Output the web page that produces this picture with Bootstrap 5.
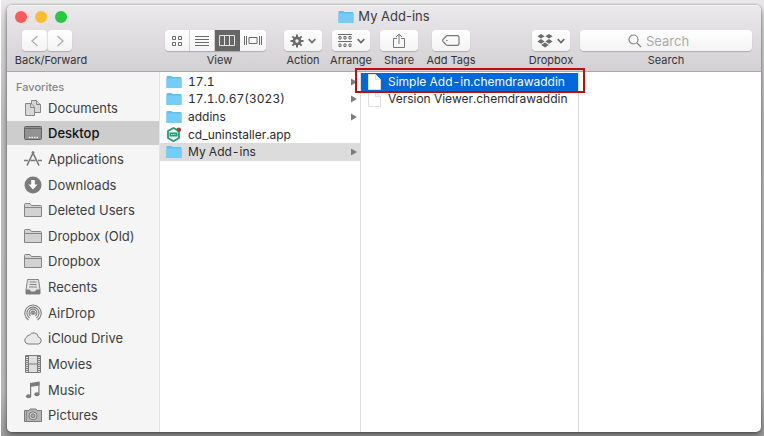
<!DOCTYPE html>
<html lang="en">
<head>
<meta charset="utf-8">
<meta name="viewport" content="width=device-width, initial-scale=1">
<title>My Add-ins</title>
<link href="https://cdn.jsdelivr.net/npm/bootstrap@5.3.0/dist/css/bootstrap.min.css" rel="stylesheet">
<style>
body { font-family: Inter, Roboto, "Liberation Sans", sans-serif; font-size: 12px; line-height: 16px; color: #2b2b2b; padding: 5px 3px 4px 7px; background: linear-gradient(to bottom, #e9e9e9, #d9d9d9 30px, #c0c0c0 120px, #bcbcbc 90%, #9c9c9c); box-shadow: inset 1px 0 #fff; }
.finder { border-radius: 5px; overflow: hidden; background: #fff; box-shadow: 0 0 2px rgba(0,0,0,.45), 0 4px 6px rgba(0,0,0,.4); }
.chrome { background: linear-gradient(#ebe9eb, #d2d0d2); border-bottom: 1px solid #a9a8a9; height: 67px; box-shadow: inset 0 1px #f6f5f6; }
.title-row { height: 24px; }
.light { width: 12px; height: 12px; border-radius: 50%; border: 0; padding: 0; }
.red { background: #fc5b57; } .amber { background: #fdbc2e; } .green { background: #28c940; }
.window-title { font-size: 13px; font-weight: 400; color: #3c3a3c; }
.tools { padding: 1px 9px 0 15px; }
.tool { width: 38px; }
.tool-nav { width: 50px; }
.tool-view { width: 101px; }
.tool-search { width: 172px; }
.grow-a { flex: 3 1 0; } .grow-b { flex: 2 1 0; }
.gap-tool { width: 10px; } .gap-wide { width: 18px; }
.key { background: linear-gradient(#fff, #f4f3f4); border: 0; border-radius: 4px; height: 21px; padding: 0; box-shadow: 0 1px 1px rgba(0,0,0,.2); color: #6b6b6b; }
.nav-key { width: 25px; color: #b0b0b0; }
.seg .key { width: 25px; border-radius: 0; border-right: 1px solid #dcdadc; }
.seg .key:first-child { border-radius: 4px 0 0 4px; }
.seg .key:last-child { border-radius: 0 4px 4px 0; border: 0; width: 26px; }
.seg .key.pressed { background: #666; color: #e5e5e5; border-color: #666; }
.cap { font-size: 11px; line-height: 14px; margin-top: 2px; color: #353335; white-space: nowrap; }
.find-input { border: 0; outline: 0; background: none; width: 58px; padding: 0; font-size: 13px; line-height: 16px; color: #333; }
.find-input::placeholder { color: #aaa; opacity: 1; }
.side { width: 153px; background: #f5f5f5; border-right: 1px solid #e4e4e4; padding: 7px 0 4px; color: #3e3e3e; }
.side h2 { font-size: 11px; line-height: 16px; margin: 0; padding-left: 9px; font-weight: 500; color: #858585; }
.side li { flex: 1 1 0; }
.side a { height: 24px; padding-left: 17px; gap: 6px; color: inherit; font-size: 13px; }
.side a.chosen { background: #cdcdcd; color: #111; font-weight: 500; }
.side svg { width: 18px; height: 18px; color: #7b7b7b; }
.pane-a { width: 201px; border-right: 1px solid #dcdcdc; padding-top: 1px; }
.pane-b { width: 218px; border-right: 1px solid #dcdcdc; padding-top: 1px; }
.files-five, .files-two { font-variant-numeric: tabular-nums; }
.files-five { height: 88px; } .files-two { height: 35px; }
.files-five li, .files-two li { flex: 1 1 0; }
.file { color: #2b2b2b; height: 100%; padding: 0 3px 0 6px; gap: 6px; }
.pane-b .file { padding-left: 7px; gap: 7px; }
.file.open { background: #dcdcdc; }
.file.lit { background: #0068da; color: #fff; }
.tri { width: 6px; height: 8px; }
.callout { position: absolute; border: 2px solid #bd0d0d; top: -5px; bottom: -2px; left: -6px; right: -7px; pointer-events: none; z-index: 2; }
</style>
<script src="https://cdn.jsdelivr.net/npm/bootstrap@5.3.0/dist/js/bootstrap.bundle.min.js"></script>
</head>
<body class="d-flex flex-column min-vh-100">
<svg class="d-none" aria-hidden="true">
  <symbol id="blue-folder" viewBox="0 0 16 14"><path d="M.5 2Q.5 1 1.500 1H5.500L6.500 2H14.500Q15.500 2 15.500 3V13H.5Z" fill="#5fc0ec"/><path d="M.5 3.500H15.500V12.500Q15.500 13 15 13H1Q.5 13 .5 12.500Z" fill="#74cdf7"/></symbol>
  <symbol id="grey-folder" viewBox="0 0 18 18"><path d="M.5 15.500V3.500Q.5 2.500 1.500 2.500H6L7.500 4.500H16.500Q17.500 4.500 17.500 5.500V15.500Z" fill="#d2d2d2" stroke="#858585"/><path d="M1 6.500H17" stroke="#858585"/></symbol>
  <symbol id="page" viewBox="0 0 13 16"><path d="M.5.500H7.500L12.500 5.500V15.500H.5Z" fill="#fff" stroke="#dedede"/><path d="M7.500.500V5.500H12.500" fill="#f2f2f2" stroke="#dedede"/></symbol>
  <symbol id="tri" viewBox="0 0 6 8"><path d="M0 .5 6 4 0 7.500Z" fill="#7c7c7c"/></symbol>
  <symbol id="down" viewBox="0 0 8 6"><path d="M.7 1.200 4 4.500 7.300 1.200" fill="none" stroke="#6b6b6b" stroke-width="1.700"/></symbol>
</svg>
<main class="finder flex-grow-1 d-flex flex-column">
  <header class="chrome">
    <div class="title-row d-flex align-items-center position-relative justify-content-center">
      <div class="d-flex gap-2 position-absolute start-0 ps-2">
        <button class="light red" aria-label="Close"></button><button class="light amber" aria-label="Minimize"></button><button class="light green" aria-label="Zoom"></button>
      </div>
      <h1 class="window-title m-0 d-flex align-items-center gap-1"><svg width="16" height="14"><use href="#blue-folder"/></svg>My Add-ins</h1>
    </div>
    <div class="tools d-flex">
      <div class="tool-nav d-flex flex-column align-items-center">
        <div class="d-flex">
          <button class="key nav-key" aria-label="Back"><svg class="d-block mx-auto" width="10" height="12"><path d="M7.500 1 2 6 7.500 11" fill="none" stroke="currentColor" stroke-width="1.300"/></svg></button>
          <button class="key nav-key border-start" aria-label="Forward"><svg class="d-block mx-auto" width="10" height="12"><path d="M2.500 1 8 6 2.500 11" fill="none" stroke="currentColor" stroke-width="1.300"/></svg></button>
        </div>
        <span class="cap ps-2">Back/Forward</span>
      </div>
      <div class="grow-a"></div>
      <div class="tool-view d-flex flex-column align-items-center">
        <div class="d-flex seg">
          <button class="key" aria-label="Icons"><svg class="d-block mx-auto" width="12" height="11" fill="none" stroke="currentColor"><path d="M1.500 1.500H4.500V4.500H1.500ZM7.500 1.500H10.500V4.500H7.500ZM1.500 7.500H4.500V10.500H1.500ZM7.500 7.500H10.500V10.500H7.500Z"/></svg></button>
          <button class="key" aria-label="List"><svg class="d-block mx-auto" width="14" height="11" stroke="currentColor"><path d="M0 1.500H14M0 4.500H14M0 7.500H14M0 10.500H14"/></svg></button>
          <button class="key pressed" aria-label="Columns"><svg class="d-block mx-auto" width="16" height="11"><path d="M.5.500H15.500V10.500H.5ZM5.500.500V10.500M10.500.500V10.500" stroke="currentColor" fill="none"/></svg></button>
          <button class="key" aria-label="Cover Flow"><svg class="d-block mx-auto" width="20" height="11" fill="none" stroke="currentColor"><path d="M1.500 1V10M3.500 1V10M6 2.500H14V8.500H6ZM16.500 1V10M18.500 1V10"/></svg></button>
        </div>
        <span class="cap ps-2">View</span>
      </div>
      <div class="gap-wide flex-shrink-0"></div>
      <div class="tool d-flex flex-column align-items-center">
        <button class="key w-100 d-flex align-items-center justify-content-center gap-1" aria-label="Action"><svg width="14" height="14" viewBox="-7 -7 14 14"><g stroke="#6b6b6b" stroke-width="2"><path d="M0-6.500V6.500M-6.500 0H6.500M-4.600-4.600 4.600 4.600M-4.600 4.600 4.600-4.600"/></g><circle r="4.400" fill="#6b6b6b"/><circle r="1.700" fill="#fafafa"/></svg><svg width="8" height="6"><use href="#down"/></svg></button>
        <span class="cap">Action</span>
      </div>
      <div class="gap-tool flex-shrink-0"></div>
      <div class="tool d-flex flex-column align-items-center">
        <button class="key w-100 d-flex align-items-center justify-content-center gap-1" aria-label="Arrange"><svg width="15" height="14" fill="none" stroke="currentColor"><path d="M0 .5H14M0 7.500H14"/><path d="M1 2.500h2v2.500H1ZM6 2.500h2v2.500H6ZM11 2.500h2v2.500H11ZM1 10h2v2.500H1ZM6 10h2v2.500H6ZM11 10h2v2.500H11Z"/></svg><svg width="8" height="6"><use href="#down"/></svg></button>
        <span class="cap">Arrange</span>
      </div>
      <div class="gap-tool flex-shrink-0"></div>
      <div class="tool d-flex flex-column align-items-center">
        <button class="key w-100" aria-label="Share"><svg class="d-block mx-auto" width="12" height="16" fill="none" stroke="#777"><path d="M4 5.500H.5V14.500H11.500V5.500H8M6 11V1M3 4 6 1 9 4"/></svg></button>
        <span class="cap">Share</span>
      </div>
      <div class="gap-tool flex-shrink-0"></div><div class="pe-1"></div>
      <div class="tool d-flex flex-column align-items-center">
        <button class="key w-100" aria-label="Add Tags"><svg class="d-block mx-auto" width="18" height="11" fill="none" stroke="#777"><path d="M5.500.600H15Q17 .6 17 2.500V8.500Q17 10.400 15 10.400H5.500Q4.500 10.400 3.800 9.500L1 6.300Q.4 5.500 1 4.700L3.800 1.500Q4.500.600 5.500.600Z" stroke-width="1.200"/><circle cx="4.800" cy="5.500" r=".8" fill="#777" stroke="none"/></svg></button>
        <span class="cap">Add Tags</span>
      </div>
      <div class="grow-b"></div>
      <div class="tool d-flex flex-column align-items-center">
        <button class="key w-100 d-flex align-items-center justify-content-center gap-1" aria-label="Dropbox"><svg width="16" height="14" fill="#6b6b6b"><path d="M4 0 7.600 2.300 4 4.600.400 2.300ZM12 0 15.600 2.300 12 4.600 8.400 2.300ZM4 5.100 7.600 7.400 4 9.700.400 7.400ZM12 5.100 15.600 7.400 12 9.700 8.400 7.400ZM8 8.500 11.800 11 8 13.600 4.200 11Z"/></svg><svg width="8" height="6"><use href="#down"/></svg></button>
        <span class="cap">Dropbox</span>
      </div>
      <div class="gap-tool flex-shrink-0"></div>
      <div class="tool-search d-flex flex-column align-items-center">
        <div class="key w-100 d-flex align-items-center justify-content-center gap-1"><svg width="14" height="14" fill="none" stroke="#858585" stroke-width="1.200"><circle cx="5.500" cy="5.500" r="4.500"/><path d="M9 9 13 13"/></svg><input class="find-input" id="find" type="text" placeholder="Search"></div>
        <label class="cap" for="find">Search</label>
      </div>
    </div>
  </header>
  <div class="d-flex flex-grow-1">
    <nav class="side d-flex flex-column flex-shrink-0" aria-label="Favorites">
      <h2>Favorites</h2>
      <ul class="list-unstyled m-0 d-flex flex-column flex-grow-1">
        <li class="d-flex align-items-center"><a href="#" class="w-100 d-flex align-items-center text-decoration-none"><svg viewBox="0 0 18 18" fill="#d8d8d8" stroke="#858585"><path d="M7.500 1.500H12.500L16.500 5.500V13.500H7.500Z"/><path d="M12.500 1.500V5.500H16.500"/><path d="M1.500 4.500H7L10.500 8V16.500H1.500Z"/><path d="M6.500 4.500V8.500H10.500"/></svg>Documents</a></li>
        <li class="d-flex align-items-center"><a href="#" class="chosen w-100 d-flex align-items-center text-decoration-none"><svg viewBox="0 0 18 18"><rect x=".5" y="2.500" width="17" height="13" rx="1" fill="#929292" stroke="#606060"/><path d="M1 4.500H17" stroke="#666"/><path d="M5 13.500H14" stroke="#eee" stroke-width="1.500" stroke-dasharray="1.500 1"/></svg>Desktop</a></li>
        <li class="d-flex align-items-center"><a href="#" class="w-100 d-flex align-items-center text-decoration-none"><svg viewBox="0 0 18 18" fill="none" stroke="currentColor" stroke-width="1.700"><path d="M9.500 2 3 15.500M8.500 2 15 15.500M0 10.500H4M6.500 10.500H11.500M14 10.500H18"/><circle cx="9" cy="2.500" r="1" stroke-width="1"/></svg>Applications</a></li>
        <li class="d-flex align-items-center"><a href="#" class="w-100 d-flex align-items-center text-decoration-none"><svg viewBox="0 0 18 18"><circle cx="9" cy="9" r="8.500" fill="#7b7b7b"/><path d="M7.200 4H10.800V8.500H13.500L9 13.500 4.500 8.500H7.200Z" fill="#fff"/></svg>Downloads</a></li>
        <li class="d-flex align-items-center"><a href="#" class="w-100 d-flex align-items-center text-decoration-none"><svg><use href="#grey-folder"/></svg>Deleted Users</a></li>
        <li class="d-flex align-items-center"><a href="#" class="w-100 d-flex align-items-center text-decoration-none"><svg><use href="#grey-folder"/></svg>Dropbox (Old)</a></li>
        <li class="d-flex align-items-center"><a href="#" class="w-100 d-flex align-items-center text-decoration-none"><svg><use href="#grey-folder"/></svg>Dropbox</a></li>
        <li class="d-flex align-items-center"><a href="#" class="w-100 d-flex align-items-center text-decoration-none"><svg viewBox="0 0 18 18"><path d="M3.500 1.500H14.500L16 11.500V16H2V11.500Z" fill="#e4e4e4" stroke="#858585"/><path d="M5.500 4H12.500M5.500 6.500H12.500M5 9H13" stroke="#858585"/><path d="M2 11.500H5.500L7 13.500H11L12.500 11.500H16V16H2Z" fill="#7b7b7b"/></svg>Recents</a></li>
        <li class="d-flex align-items-center"><a href="#" class="w-100 d-flex align-items-center text-decoration-none"><svg viewBox="0 0 18 18" fill="none" stroke="#7b7b7b" stroke-width="1.100"><path d="M4.500 16A8.200 8.200 0 1 1 13.500 16M5.500 14A6 6 0 1 1 12.500 14M6.500 12A3.900 3.900 0 1 1 11.500 12M7.500 10.500A2 2 0 1 1 10.500 10.500"/><circle cx="9" cy="9.500" r=".8" fill="#7b7b7b"/></svg>AirDrop</a></li>
        <li class="d-flex align-items-center"><a href="#" class="w-100 d-flex align-items-center text-decoration-none"><svg viewBox="0 0 18 18"><path d="M4.200 15A3.700 3.700 0 0 1 2.800 8 2.600 2.600 0 0 1 5.600 6.100 4.700 4.700 0 0 1 14.300 8.100 3.500 3.500 0 0 1 14.300 15Z" fill="#e9e9e9" stroke="#7b7b7b"/></svg>iCloud Drive</a></li>
        <li class="d-flex align-items-center"><a href="#" class="w-100 d-flex align-items-center text-decoration-none"><svg viewBox="0 0 18 18"><path d="M1.500.500H16.500V17.500H1.500Z" fill="#dedede" stroke="#7b7b7b"/><path d="M4.500.500V17.500M13.500.500V17.500M4.500 9H13.500" stroke="#7b7b7b"/><path d="M3 1V17M15 1V17" stroke="#7b7b7b" stroke-width="2" stroke-dasharray="1 1"/></svg>Movies</a></li>
        <li class="d-flex align-items-center"><a href="#" class="w-100 d-flex align-items-center text-decoration-none"><svg viewBox="0 0 18 18" fill="#7b7b7b"><path d="M6 2 15.500.500V4.500L6 6Z"/><path d="M6 2H7.200V15H6ZM14.300 1H15.500V13H14.300Z"/><ellipse cx="4.600" cy="15.300" rx="2.600" ry="2"/><ellipse cx="12.900" cy="13.300" rx="2.600" ry="2"/></svg>Music</a></li>
        <li class="d-flex align-items-center"><a href="#" class="w-100 d-flex align-items-center text-decoration-none"><svg viewBox="0 0 18 18"><path d="M.5 4.500H5L6 3H12L13 4.500H17.500V15.500H.5Z" fill="#b5b5b5" stroke="#7b7b7b"/><path d="M2.500 5V15" stroke="#8b8b8b"/><circle cx="9" cy="9.800" r="4" fill="#ddd" stroke="#777"/><circle cx="9" cy="9.800" r="2" fill="#aaa" stroke="#777"/></svg>Pictures</a></li>
      </ul>
    </nav>
    <section class="pane-a flex-shrink-0" aria-label="Folders">
      <ul class="files-five list-unstyled m-0 d-flex flex-column">
        <li><a href="#" class="file d-flex align-items-center text-decoration-none"><svg width="16" height="14"><use href="#blue-folder"/></svg><span class="flex-grow-1">17.1</span><svg class="tri"><use href="#tri"/></svg></a></li>
        <li><a href="#" class="file d-flex align-items-center text-decoration-none"><svg width="16" height="14"><use href="#blue-folder"/></svg><span class="flex-grow-1">17.1.0.67(3023)</span><svg class="tri"><use href="#tri"/></svg></a></li>
        <li><a href="#" class="file d-flex align-items-center text-decoration-none"><svg width="16" height="14"><use href="#blue-folder"/></svg><span class="flex-grow-1">addins</span><svg class="tri"><use href="#tri"/></svg></a></li>
        <li><a href="#" class="file d-flex align-items-center text-decoration-none"><svg width="16" height="15" viewBox="0 0 16 15"><path d="M7.500 1 13 4V11L7.500 14.200 2 11V4Z" fill="#e9f6ef" stroke="#239b72" stroke-width="1.800"/><path d="M3.500 5.500H11.500V9.500H3.500Z" fill="#239b72"/><path d="M5 7.500H10" stroke="#bfe5d5" stroke-dasharray="1.500 .7"/><circle cx="12.800" cy="2.800" r="2.300" fill="#a6413c"/></svg><span class="flex-grow-1">cd_uninstaller.app</span></a></li>
        <li><a href="#" class="file open d-flex align-items-center text-decoration-none"><svg width="16" height="14"><use href="#blue-folder"/></svg><span class="flex-grow-1">My Add-ins</span><svg class="tri"><use href="#tri"/></svg></a></li>
      </ul>
    </section>
    <section class="pane-b flex-shrink-0" aria-label="My Add-ins">
      <ul class="files-two list-unstyled m-0 d-flex flex-column">
        <li class="position-relative"><a href="#" class="file lit d-flex align-items-center text-decoration-none"><svg width="13" height="16"><use href="#page"/></svg>Simple Add-in.chemdrawaddin</a><div class="callout"></div></li>
        <li><a href="#" class="file d-flex align-items-center text-decoration-none"><svg width="13" height="16"><use href="#page"/></svg>Version Viewer.chemdrawaddin</a></li>
      </ul>
    </section>
    <section class="flex-grow-1" aria-label="Preview"></section>
  </div>
</main>
</body>
</html>
